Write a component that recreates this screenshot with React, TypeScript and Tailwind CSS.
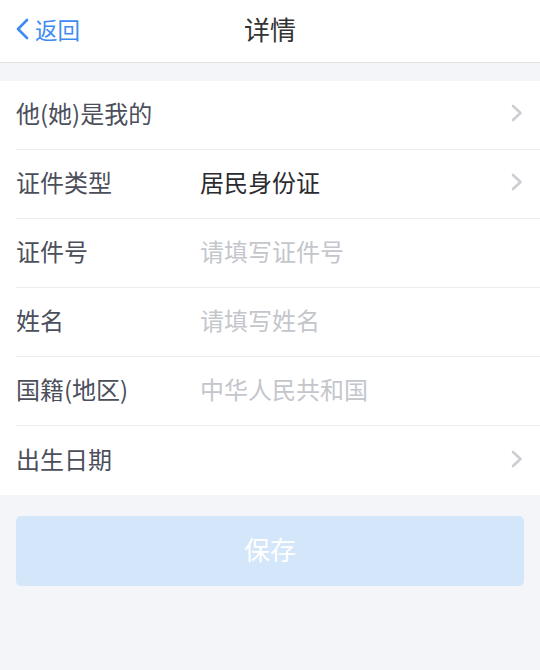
import React from 'react'

const font = { fontFamily: '"Noto Sans CJK SC", "Noto Sans", sans-serif' }

type Row = {
  label: string
  value?: string
  placeholder?: string
  arrow?: boolean
}

const rows: Row[] = [
  { label: '他(她)是我的', arrow: true },
  { label: '证件类型', value: '居民身份证', arrow: true },
  { label: '证件号', placeholder: '请填写证件号' },
  { label: '姓名', placeholder: '请填写姓名' },
  { label: '国籍(地区)', placeholder: '中华人民共和国' },
  { label: '出生日期', arrow: true },
]

function Chevron() {
  return (
    <svg width="12" height="18" viewBox="0 0 12 18" className="shrink-0">
      <path d="M2 2l7.5 7L2 16" fill="none" stroke="#cdced3" strokeWidth="2.6" strokeLinecap="round" strokeLinejoin="round" />
    </svg>
  )
}

export default function App() {
  return (
    <div className="w-[540px] h-[670px] bg-[#f4f5f9] flex flex-col" style={font}>
      {/* Header */}
      <header className="h-[63px] bg-white border-b border-[#e2e2e4] relative flex items-center justify-center pb-[4px]">
        <div className="absolute left-[15px] top-0 h-full pb-[4px] flex items-center gap-[6px] text-[#3d8bf2]">
          <svg width="14" height="22" viewBox="0 0 14 22">
            <path d="M12 2L3 11l9 9" fill="none" stroke="#3d8bf2" strokeWidth="2.6" strokeLinecap="round" strokeLinejoin="round" />
          </svg>
          <span className="text-[22.5px] leading-none">返回</span>
        </div>
        <h1 className="text-[26px] leading-none text-[#333333]">详情</h1>
      </header>

      {/* Form */}
      <div className="mt-[18px] bg-white">
        {rows.map((r, i) => (
          <div key={r.label} className="pl-[16px]">
            <div
              className={`h-[69px] flex items-center pr-[17px] pb-[4px] ${
                i < rows.length - 1 ? 'border-b border-[#ececee]' : ''
              }`}
            >
              <span className="w-[184px] shrink-0 text-[24px] leading-none text-[#4b4f5b]">{r.label}</span>
              <span
                className={`flex-1 text-[24px] leading-none ${r.value ? 'text-[#2b2b2f]' : 'text-[#c4c6cc]'}`}
              >
                {r.value ?? r.placeholder ?? ''}
              </span>
              {r.arrow && <Chevron />}
            </div>
          </div>
        ))}
      </div>

      {/* Save */}
      <div className="px-[16px] pt-[21px]">
        <button className="w-full h-[70px] rounded-[5px] bg-[#d3e6fa] text-white text-[26px] leading-none pb-[4px]">保存</button>
      </div>
    </div>
  )
}
